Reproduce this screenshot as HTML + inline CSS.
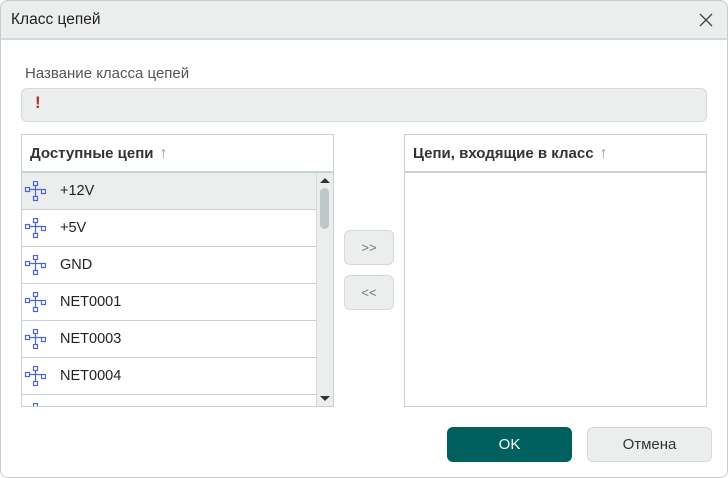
<!DOCTYPE html>
<html><head><meta charset="utf-8"><style>
*{box-sizing:border-box;margin:0;padding:0}
body{width:728px;height:478px;background:#fff;font-family:"Liberation Sans","DejaVu Sans",sans-serif;position:relative;overflow:hidden;color:#222}
.dlg{position:absolute;left:0;top:0;width:728px;height:478px;border-radius:8px;overflow:hidden;background:#fff}
.frame{position:absolute;left:0;top:0;width:728px;height:478px;border:1px solid #c8cccc;border-radius:8px;pointer-events:none}
.title{position:absolute;left:0;top:0;width:728px;height:40px;background:#eceeed;border-bottom:2px solid #d3dada;font-size:15.5px;line-height:40px;padding-left:11px;color:#222}
.abs{position:absolute}
.lbl{left:25px;top:65px;font-size:15px;color:#555}
.inp{left:21px;top:88px;width:686px;height:34px;background:#eceeed;border:1px solid #d3dada;border-radius:6px}
.tbl{border:1px solid #c8d2d2;background:#fff}
.hdr{position:absolute;left:0;top:0;right:0;height:38px;border-bottom:2px solid #c8d2d2;font-weight:bold;font-size:15px;line-height:38px;padding-left:8px;color:#333}
.hdr span{color:#999;font-weight:normal;font-size:16px;margin-left:6px}
.row{position:absolute;left:0;width:294px;height:37px;border-bottom:1px solid #c8d2d2;font-size:14.5px;line-height:37px;padding-left:38px;color:#222}
.row svg{position:absolute;left:2px;top:8px}
.btn{border:1px solid #d3dada;border-radius:6px;background:#eceeed;text-align:center;color:#777;font-size:13px}
</style></head><body>
<div class="dlg">
<div class="title">Класс цепей
<svg class="abs" style="left:699px;top:13px" width="14" height="14"><path d="M1 1L13 13M13 1L1 13" stroke="#444" stroke-width="1.3"/></svg></div>
<div class="abs lbl">Название класса цепей</div>
<div class="abs inp"><span class="abs" style="left:13px;top:4px;color:#b03030;font-weight:bold;font-size:17px">!</span></div>

<div class="abs tbl" style="left:21px;top:134px;width:313px;height:273px">
<div class="hdr">Доступные цепи<span>↑</span></div>
<div style="position:absolute;left:0;top:38px;width:311px;height:233px;overflow:hidden">
<div class="row" style="top:0;background:#eceeed;height:37px">+12V<svg width="22" height="22" viewBox="0 0 22 22"><g fill="none" stroke="#4a66d4" stroke-width="1.2"><rect x="9.5" y="0.5" width="4" height="4"/><rect x="1.5" y="6.5" width="4" height="4"/><rect x="17.5" y="8.5" width="4" height="4"/><rect x="9.5" y="15.5" width="4" height="4"/><path d="M11.5 4.5V15.5M5.5 8.5H17.5"/></g></svg></div>
<div class="row" style="top:37px">+5V<svg width="22" height="22" viewBox="0 0 22 22"><g fill="none" stroke="#4a66d4" stroke-width="1.2"><rect x="9.5" y="0.5" width="4" height="4"/><rect x="1.5" y="6.5" width="4" height="4"/><rect x="17.5" y="8.5" width="4" height="4"/><rect x="9.5" y="15.5" width="4" height="4"/><path d="M11.5 4.5V15.5M5.5 8.5H17.5"/></g></svg></div>
<div class="row" style="top:74px">GND<svg width="22" height="22" viewBox="0 0 22 22"><g fill="none" stroke="#4a66d4" stroke-width="1.2"><rect x="9.5" y="0.5" width="4" height="4"/><rect x="1.5" y="6.5" width="4" height="4"/><rect x="17.5" y="8.5" width="4" height="4"/><rect x="9.5" y="15.5" width="4" height="4"/><path d="M11.5 4.5V15.5M5.5 8.5H17.5"/></g></svg></div>
<div class="row" style="top:111px">NET0001<svg width="22" height="22" viewBox="0 0 22 22"><g fill="none" stroke="#4a66d4" stroke-width="1.2"><rect x="9.5" y="0.5" width="4" height="4"/><rect x="1.5" y="6.5" width="4" height="4"/><rect x="17.5" y="8.5" width="4" height="4"/><rect x="9.5" y="15.5" width="4" height="4"/><path d="M11.5 4.5V15.5M5.5 8.5H17.5"/></g></svg></div>
<div class="row" style="top:148px">NET0003<svg width="22" height="22" viewBox="0 0 22 22"><g fill="none" stroke="#4a66d4" stroke-width="1.2"><rect x="9.5" y="0.5" width="4" height="4"/><rect x="1.5" y="6.5" width="4" height="4"/><rect x="17.5" y="8.5" width="4" height="4"/><rect x="9.5" y="15.5" width="4" height="4"/><path d="M11.5 4.5V15.5M5.5 8.5H17.5"/></g></svg></div>
<div class="row" style="top:185px">NET0004<svg width="22" height="22" viewBox="0 0 22 22"><g fill="none" stroke="#4a66d4" stroke-width="1.2"><rect x="9.5" y="0.5" width="4" height="4"/><rect x="1.5" y="6.5" width="4" height="4"/><rect x="17.5" y="8.5" width="4" height="4"/><rect x="9.5" y="15.5" width="4" height="4"/><path d="M11.5 4.5V15.5M5.5 8.5H17.5"/></g></svg></div>
<div class="row" style="top:222px"><svg width="22" height="22" viewBox="0 0 22 22"><g fill="none" stroke="#4a66d4" stroke-width="1.2"><rect x="9.5" y="0.5" width="4" height="4"/><rect x="1.5" y="6.5" width="4" height="4"/></g></svg></div>
<div style="position:absolute;left:294px;top:0;width:17px;height:233px;background:#eceeed;border-left:1px solid #d3dada">
<div style="position:absolute;left:3px;top:5px;width:0;height:0;border-left:5px solid transparent;border-right:5px solid transparent;border-bottom:5px solid #333"></div>
<div style="position:absolute;left:3px;top:15px;width:9px;height:41px;background:#bfc8c8;border-radius:5px"></div>
<div style="position:absolute;left:3px;top:223px;width:0;height:0;border-left:5px solid transparent;border-right:5px solid transparent;border-top:5px solid #333"></div>
</div></div></div>

<div class="abs btn" style="left:344px;top:230px;width:50px;height:35px;line-height:33px">&gt;&gt;</div>
<div class="abs btn" style="left:344px;top:275px;width:50px;height:35px;line-height:33px">&lt;&lt;</div>

<div class="abs tbl" style="left:404px;top:134px;width:303px;height:273px">
<div class="hdr">Цепи, входящие в класс<span>↑</span></div></div>

<div class="abs" style="left:447px;top:427px;width:125px;height:35px;background:#00605f;border-radius:6px;color:#fff;font-size:15px;text-align:center;line-height:35px">OK</div>
<div class="abs btn" style="left:587px;top:427px;width:125px;height:35px;line-height:33px;font-size:15px;color:#333">Отмена</div>
</div>
<div class="frame"></div>
</body></html>
